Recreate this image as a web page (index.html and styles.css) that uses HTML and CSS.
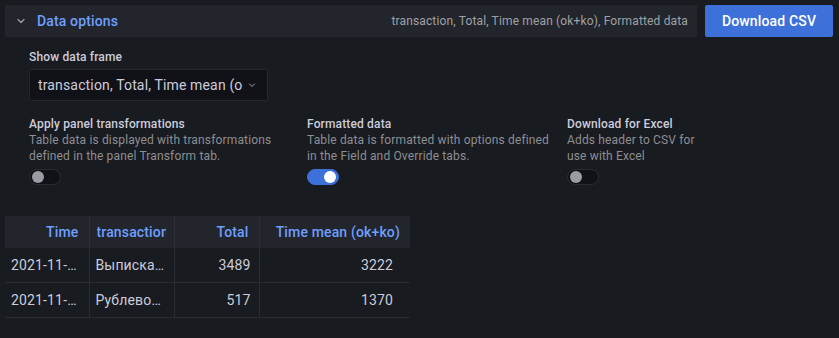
FILE: index.html
```html
<!DOCTYPE html>
<html lang="en">
<head>
  <meta charset="UTF-8">
  <meta name="viewport" content="width=device-width, initial-scale=1.0">
  <title>Inspect data</title>
  <link rel="stylesheet" href="styles.css">
</head>
<body>
  <div class="toolbar">
    <div class="options-header">
      <svg class="chevron" width="12" height="12" viewBox="0 0 24 24"><path d="M6 9l6 6 6-6" fill="none" stroke="#9fa1a7" stroke-width="2.4" stroke-linecap="round" stroke-linejoin="round"/></svg>
      <span class="options-title">Data options</span>
      <span class="options-summary">transaction, Total, Time mean (ok+ko), Formatted data</span>
    </div>
    <button class="btn-primary">Download CSV</button>
  </div>

  <div class="options-body">
    <div class="field-label">Show data frame</div>
    <div class="select">
      <span class="select-value">transaction, Total, Time mean (ok+ko)</span>
      <svg class="select-arrow" width="12" height="12" viewBox="0 0 24 24"><path d="M7 10l5 5 5-5" fill="none" stroke="#9fa1a7" stroke-width="2" stroke-linecap="round" stroke-linejoin="round"/></svg>
    </div>

    <div class="switches">
      <div class="switch-field">
        <div class="switch-title">Apply panel transformations</div>
        <div class="switch-desc">Table data is displayed with transformations<br>defined in the panel Transform tab.</div>
        <div class="switch"><span class="knob"></span></div>
      </div>
      <div class="switch-field">
        <div class="switch-title">Formatted data</div>
        <div class="switch-desc">Table data is formatted with options defined<br>in the Field and Override tabs.</div>
        <div class="switch on"><span class="knob"></span></div>
      </div>
      <div class="switch-field">
        <div class="switch-title">Download for Excel</div>
        <div class="switch-desc">Adds header to CSV for<br>use with Excel</div>
        <div class="switch"><span class="knob"></span></div>
      </div>
    </div>
  </div>

  <table class="data-table">
    <colgroup>
      <col style="width: 84px">
      <col style="width: 85px">
      <col style="width: 85px">
      <col style="width: 151px">
    </colgroup>
    <thead>
      <tr>
        <th class="num"><span class="cell">Time</span></th>
        <th><span class="cell">transaction</span></th>
        <th class="num"><span class="cell">Total</span></th>
        <th class="num"><span class="cell">Time mean (ok+ko)</span></th>
      </tr>
    </thead>
    <tbody>
      <tr>
        <td><span class="cell ellipsis">2021-11-30 10:00:00</span></td>
        <td><span class="cell ellipsis">Выписка по счёту</span></td>
        <td class="num">3489</td>
        <td class="num">3222</td>
      </tr>
      <tr>
        <td><span class="cell ellipsis">2021-11-30 10:00:00</span></td>
        <td><span class="cell ellipsis">Рублевой перевод</span></td>
        <td class="num">517</td>
        <td class="num">1370</td>
      </tr>
    </tbody>
  </table>
</body>
</html>
```

FILE: styles.css
```css
body {
  margin: 0;
  background: #181b1f;
  color: #ccccdc;
  font-family: Roboto, "Liberation Sans", sans-serif;
  font-size: 14px;
  letter-spacing: 0.15px;
}

.toolbar {
  display: flex;
  align-items: center;
  gap: 8px;
  padding: 5px 6px 0 5px;
}

.options-header {
  flex: 1;
  height: 32px;
  display: flex;
  align-items: center;
  padding: 0 9px 0 10px;
  background: #22252b;
}

.chevron {
  margin-right: 10px;
}

.options-title {
  color: #6e9fff;
  font-size: 14px;
  font-weight: 500;
}

.options-summary {
  margin-left: auto;
  font-size: 12px;
  color: #9fa1a7;
}

.btn-primary {
  width: 128px;
  height: 32px;
  border: none;
  border-radius: 2px;
  background: #3d71d9;
  color: #fff;
  font-family: inherit;
  font-size: 14px;
  font-weight: 500;
  letter-spacing: 0.15px;
}

.options-body {
  padding: 12px 0 0 29px;
}

.field-label {
  font-size: 12px;
  font-weight: 500;
  color: #ccccdc;
  line-height: 16px;
  margin-bottom: 4px;
}

.select {
  display: flex;
  align-items: center;
  padding: 0 9px 0 8px;
  box-sizing: border-box;
  width: 239px;
  height: 32px;
  background: #111217;
  border: 1px solid #25272d;
  border-radius: 2px;
}

.select-value {
  flex: 1;
  overflow: hidden;
  white-space: nowrap;
  font-size: 14px;
  color: #ccccdc;
  margin-right: 3px;
}

.switches {
  display: grid;
  grid-template-columns: 278px 260px auto;
  margin-top: 15px;
}

.switch-title {
  font-size: 12px;
  font-weight: 500;
  line-height: 16px;
  color: #ccccdc;
}

.switch-desc {
  font-size: 12px;
  line-height: 16px;
  color: #8e8e93;
}

.switch {
  position: relative;
  width: 30px;
  height: 14px;
  margin-top: 5px;
  border: 1px solid #2a2c31;
  border-radius: 8px;
  background: #111217;
}

.switch .knob {
  position: absolute;
  top: 1px;
  left: 2px;
  width: 12px;
  height: 12px;
  border-radius: 50%;
  background: #9a9ba3;
}

.switch.on {
  background: #3d71d9;
  border-color: #3d71d9;
}

.switch.on .knob {
  left: auto;
  right: 2px;
  background: #fff;
}

.data-table {
  margin: 31px 0 0 5px;
  border-collapse: collapse;
  table-layout: fixed;
  width: 405px;
}

.data-table th {
  height: 32px;
  padding: 0 8px 0 7px;
  background: #22252b;
  color: #6e9fff;
  font-weight: 500;
  text-align: left;
  white-space: nowrap;
  border-left: 1px solid #2c2f35;
}

.data-table td {
  height: 34px;
  padding: 0 8px 0 6px;
  white-space: nowrap;
  border-bottom: 1px solid #2a2c31;
  border-left: 1px solid #2a2c31;
}

.data-table .cell {
  display: block;
  overflow: hidden;
  white-space: nowrap;
}

.data-table .ellipsis {
  text-overflow: ellipsis;
}

.data-table th:first-child,
.data-table td:first-child {
  border-left: none;
}

.data-table .num {
  text-align: right;
}

.data-table th.num {
  padding-right: 10px;
}

.data-table td:last-child {
  padding-right: 17px;
}
```
